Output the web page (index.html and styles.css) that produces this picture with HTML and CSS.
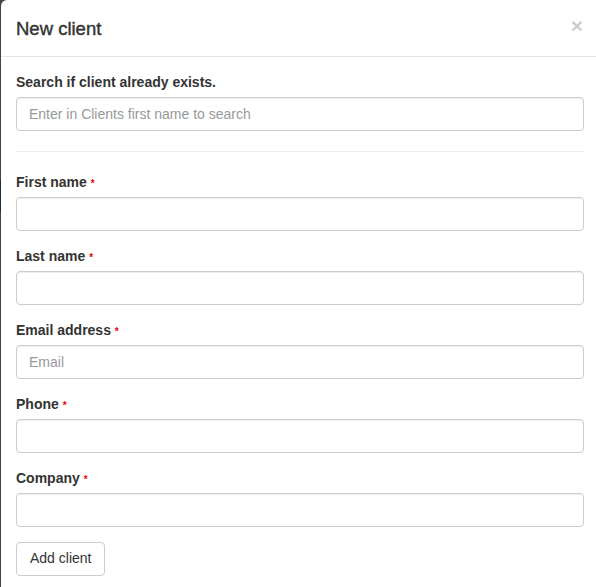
FILE: index.html
```html
<!DOCTYPE html>
<html>
<head>
<meta charset="utf-8">
<link rel="stylesheet" href="styles.css">
</head>
<body>
<div class="modal">
  <div class="modal-header">
    <button class="close" type="button">&times;</button>
    <h4 class="modal-title">New client</h4>
  </div>
  <div class="modal-body">
    <div class="form-group">
      <label>Search if client already exists.</label>
      <input class="form-control" type="text" placeholder="Enter in Clients first name to search">
    </div>
    <hr>
    <div class="form-group">
      <label>First name <span class="req">*</span></label>
      <input class="form-control" type="text">
    </div>
    <div class="form-group">
      <label>Last name <span class="req">*</span></label>
      <input class="form-control" type="text">
    </div>
    <div class="form-group">
      <label>Email address <span class="req">*</span></label>
      <input class="form-control" type="email" placeholder="Email">
    </div>
    <div class="form-group">
      <label>Phone <span class="req">*</span></label>
      <input class="form-control" type="text">
    </div>
    <div class="form-group">
      <label>Company <span class="req">*</span></label>
      <input class="form-control" type="text">
    </div>
    <button class="btn" type="button">Add client</button>
  </div>
</div>
</body>
</html>
```

FILE: styles.css
```css
html, body {
  margin: 0;
  padding: 0;
  height: 100%;
  overflow: hidden;
}
body {
  background: linear-gradient(to bottom, #454545 0, #454545 180px, #1c2f45 180px, #1c2f45 212px, #454545 212px, #454545 100%);
  font-family: "Liberation Sans", Arial, sans-serif;
  font-size: 14px;
  line-height: 1.42857;
  color: #333;
}
.modal {
  margin-left: 1px;
  width: 598px;
  height: 100%;
  background: #fff;
  border-radius: 6px 0 0 0;
  box-sizing: border-box;
}
.modal-header {
  padding: 16px 15px 14px;
  border-bottom: 1px solid #e5e5e5;
}
.modal-title {
  margin: 0;
  font-size: 18.5px;
  font-weight: normal;
  -webkit-text-stroke: 0.4px #333;
  line-height: 25.7px;
  color: #333;
}
.close {
  float: right;
  margin-top: -1px;
  margin-right: 1px;
  padding: 0;
  border: 0;
  background: transparent;
  font-family: "Liberation Sans", Arial, sans-serif;
  font-size: 21px;
  font-weight: bold;
  line-height: 1;
  color: #000;
  opacity: 0.2;
}
.modal-body {
  padding: 15px;
}
.form-group {
  margin-bottom: 15px;
}
label {
  display: inline-block;
  padding-top: 1px;
  margin-bottom: 4px;
  font-weight: bold;
}
.req {
  color: #e00;
  font-size: 10px;
}
.form-control {
  display: block;
  width: 100%;
  height: 34px;
  box-sizing: border-box;
  padding: 6px 12px;
  font-family: inherit;
  font-size: 14px;
  line-height: 1.42857;
  color: #555;
  background: #fff;
  border: 1px solid #ccc;
  border-radius: 4px;
  box-shadow: inset 0 1px 1px rgba(0,0,0,.075);
}
.form-control::placeholder {
  color: #999;
}
hr {
  margin: 20px 0;
  border: 0;
  border-top: 1px solid #eee;
}
.btn {
  display: inline-block;
  height: 34px;
  padding: 6px 13px;
  font-family: inherit;
  font-size: 14px;
  line-height: 1.42857;
  color: #333;
  background: #fff;
  border: 1px solid #ccc;
  border-radius: 4px;
}
```
